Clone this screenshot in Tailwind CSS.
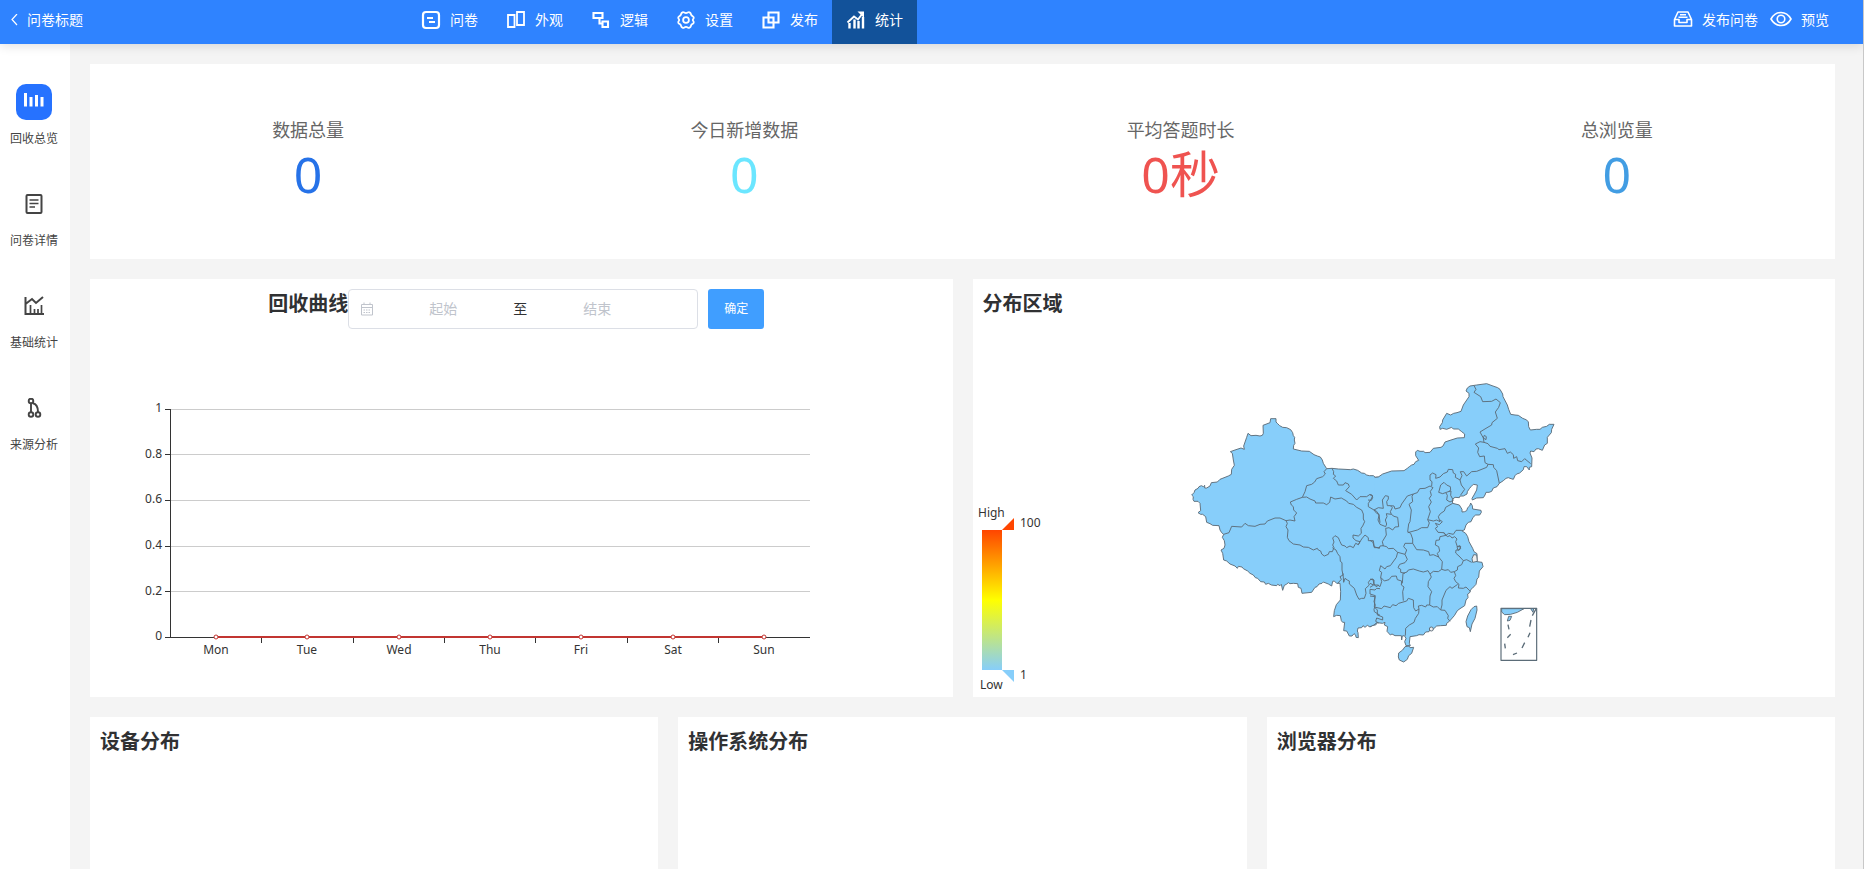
<!DOCTYPE html>
<html lang="zh-CN">
<head>
<meta charset="utf-8">
<meta name="viewport" content="width=device-width, initial-scale=1">
<title>问卷标题</title>
<script src="https://cdn.jsdelivr.net/npm/@tailwindcss/browser@4"></script>
</head>
<body class="flex min-h-screen flex-col border-r border-[#c8c8c8] bg-[#f4f4f4] font-['Noto_Sans','Noto_Sans_CJK_SC',sans-serif] text-sm text-[#303133]">
<header class="relative z-10 flex h-11 items-start bg-[#2f83ff] text-sm leading-5 text-white shadow-[0_2px_10px_rgba(0,0,0,0.12)]">
  <a href="#" class="flex h-10 w-[407px] items-center gap-2 pl-[9px]">
    <svg class="h-3 w-[10px]" viewBox="0 0 10 12" fill="none" stroke="currentColor" stroke-width="1.2"><path d="M8 0 3 5.500l5 5.500"/></svg>
    问卷标题
  </a>
  <nav class="flex flex-1">
    <a href="#" class="flex h-11 items-center gap-[9px] px-[14px] pb-1">
      <svg class="size-5" viewBox="0 0 20 20" fill="none" stroke="currentColor" stroke-width="2.200"><rect x="2" y="2" width="16" height="16" rx="3"/><path d="M6 8h6M8 12h6" stroke-width="1.800"/></svg>问卷</a>
    <a href="#" class="flex h-11 items-center gap-[9px] px-[14px] pb-1">
      <svg class="size-5" viewBox="0 0 20 20" fill="none" stroke="currentColor" stroke-width="1.800"><path d="M2 5h6.500v12H2zM11 2h7v13h-7z"/></svg>外观</a>
    <a href="#" class="flex h-11 items-center gap-[9px] px-[14px] pb-1">
      <svg class="size-5" viewBox="0 0 20 20" fill="none" stroke="currentColor" stroke-width="2.100"><path d="M2.500 3h9v5h-9zM11.500 11.500h5.500v5.500h-5.500zM8.500 8v5.500h3"/></svg>逻辑</a>
    <a href="#" class="flex h-11 items-center gap-[9px] px-[14px] pb-1">
      <svg class="size-5" viewBox="0 0 20 20" fill="none" stroke="currentColor" stroke-width="1.800" stroke-linejoin="round"><path d="M6.500 2.300C8 1.700 8.300 3.200 10 3.200s2-1.500 3.500-.9c1.500.6 1.200 1.700 1.800 2.700s2 1 2.400 2.300c.4 1.400-.9 1.700-.9 2.700s1.300 1.300.9 2.700c-.4 1.300-1.800 1.300-2.400 2.300s-.3 2.100-1.800 2.700c-1.500.6-1.800-.9-3.500-.9s-2 1.500-3.500.9C5 17.100 5.300 16 4.700 15s-2-1-2.400-2.300c-.4-1.400.9-1.700.9-2.700s-1.300-1.300-.9-2.700C2.700 6 4.100 6 4.700 5S5 2.900 6.500 2.300z"/><circle cx="10" cy="10" r="2.900"/></svg>设置</a>
    <a href="#" class="flex h-11 items-center gap-[9px] px-[14px] pb-1">
      <svg class="size-5" viewBox="0 0 20 20" fill="none" stroke="currentColor" stroke-width="2.100"><path d="M7.500 2.500h10v10h-10zM7.500 7.500h-5v10h10v-5M12.500 12.500v-5h-5"/></svg>发布</a>
    <a href="#" aria-current="page" class="flex h-11 items-center gap-[9px] bg-[#12529a] px-[14px] pb-1">
      <svg class="size-5" viewBox="0 0 20 20" fill="none" stroke="currentColor" stroke-width="2.400"><path d="M3.500 13v5.500M8.500 9.500v9M12.500 11v7.500M17 7v11.500"/><path d="m1.500 12.500 6.500-6 4 3 4.500-6" stroke-width="1.900"/><path d="M11.500 1.500H18v6.500z" fill="currentColor" stroke="none"/></svg>统计</a>
  </nav>
  <div class="flex h-10 items-center gap-3 pr-[34px]">
    <a href="#" class="flex items-center gap-[9px]">
      <svg class="h-5 w-5" viewBox="0 0 20 20" fill="none" stroke="currentColor" stroke-width="1.600" stroke-linejoin="round"><path d="M1.500 9.500V16h17V9.500L15 2H5zM1.500 9.500h4.500v3h8v-3h4.500M7 4.700h6M5.500 7.300h9"/></svg>发布问卷</a>
    <a href="#" class="flex items-center gap-[9px]">
      <svg class="h-5 w-[22px]" viewBox="0 0 22 20" fill="none" stroke="currentColor" stroke-width="1.600"><path d="M1 9C3.500 4.500 7 2.500 11 2.500S18.500 4.500 21 9C18.500 13.500 15 15.500 11 15.500S3.500 13.500 1 9z"/><circle cx="11" cy="9" r="3.800"/></svg>预览</a>
  </div>
</header>

<div class="flex flex-1">
  <aside class="w-[70px] shrink-0 bg-white pt-10 text-xs leading-4 text-[#444]">
    <nav class="flex w-[68px] flex-col gap-[39px]">
      <a href="#" aria-current="page" class="flex flex-col items-center gap-[11px]">
        <span class="flex size-9 items-center justify-center rounded-[10px] bg-[#2672ff] text-white">
          <svg class="size-5" viewBox="0 0 20 20" fill="currentColor"><path d="M0 1h3v13.500H0zM5.500 5h3v9.500h-3zM11 3h3v11.500h-3zM16.500 5h3v9.500h-3z"/></svg>
        </span>
        <span class="flex h-4 items-center">回收总览</span>
      </a>
      <a href="#" class="flex flex-col items-center gap-[11px]">
        <span class="flex size-9 items-center justify-center"><svg class="size-5" viewBox="0 0 20 20" fill="none" stroke="currentColor" stroke-width="2"><rect x="2.500" y="1" width="15" height="18" rx="1"/><path d="M5.500 6h9M5.500 9.500h9M5.500 13h5.500" stroke-width="1.700"/></svg></span>
        <span class="flex h-4 items-center">问卷详情</span>
      </a>
      <a href="#" class="flex flex-col items-center gap-[11px]">
        <span class="flex size-9 items-center justify-center"><svg class="size-5" viewBox="0 0 20 20" fill="none" stroke="currentColor" stroke-width="2"><path d="M1.500 1v17h18.500M1.500 8 8 3l4 4 7-6"/><path d="M6.500 18V9M10.500 18v-5M14 18v-5M17.500 18V9" stroke-width="1.700"/></svg></span>
        <span class="flex h-4 items-center">基础统计</span>
      </a>
      <a href="#" class="flex flex-col items-center gap-[11px]">
        <span class="flex size-9 items-center justify-center"><svg class="size-5" viewBox="0 0 20 20" fill="none" stroke="currentColor" stroke-width="1.900"><circle cx="7" cy="3" r="2.300"/><circle cx="7" cy="16.500" r="2.300"/><circle cx="14" cy="16.500" r="2.300"/><path d="M7 5.500V14M8.800 5.300C12 6 14 9 14 14"/></svg></span>
        <span class="flex h-4 items-center">来源分析</span>
      </a>
    </nav>
  </aside>

  <main class="flex min-w-0 flex-1 flex-col gap-5 pt-5 pr-7 pl-5">
    <section class="grid h-[195px] grid-cols-4 bg-white pt-[54px] text-center text-lg leading-6 text-[#666]">
      <div>数据总量<p class="text-[50px] leading-[64px] text-[#2672e8]">0</p></div>
      <div>今日新增数据<p class="text-[50px] leading-[64px] text-[#6be6ff]">0</p></div>
      <div>平均答题时长<p class="text-[50px] leading-[64px] text-[#ef5350]">0秒</p></div>
      <div>总浏览量<p class="text-[50px] leading-[64px] text-[#429de3]">0</p></div>
    </section>

    <div class="grid grid-cols-2 gap-5">
      <section class="flex h-[418px] flex-col justify-between bg-white pt-[10px]">
        <form class="flex items-start justify-center">
          <h2 class="text-xl leading-[30px] font-bold">回收曲线</h2>
          <div class="flex h-10 w-[350px] items-center rounded border border-[#dcdfe6] pl-[11px]">
            <svg class="mr-[5px] size-[14px]" viewBox="0 0 14 14" fill="none" stroke="#c0c4cc"><path d="M1.500 2.500h11v10.500h-11zM1.500 5.500h11M4 .5v2M10 .5v2"/><path d="M3.500 8h7M3.500 10.500h7" stroke-dasharray="1.500 1"/></svg>
            <input type="text" aria-label="起始" placeholder="起始" class="w-32 text-center text-sm outline-none placeholder:text-[#c0c4cc]">
            <span class="w-[26px] text-center">至</span>
            <input type="text" aria-label="结束" placeholder="结束" class="w-32 text-center text-sm outline-none placeholder:text-[#c0c4cc]">
          </div>
          <button type="button" class="mx-[10px] h-10 w-14 rounded-[3px] bg-[#409eff] text-xs text-white">确定</button>
        </form>
        <svg class="h-[348px] w-[800px] max-w-full" viewBox="0 0 800 348" font-size="12" fill="#333">
          <path d="M81 60.500h639M81 105.500h639M81 151.500h639M81 197.500h639M81 242.500h639" stroke="#ccc"/>
          <path d="M80.500 60v229M75 60.500h5M75 105.500h5M75 151.500h5M75 197.500h5M75 242.500h5M75 288.500h645M171.500 289v5M263.500 289v5M354.500 289v5M445.500 289v5M537.500 289v5M628.500 289v5" stroke="#333"/>
          <g text-anchor="end"><text x="72" y="63">1</text><text x="72" y="109">0.8</text><text x="72" y="154">0.6</text><text x="72" y="200">0.4</text><text x="72" y="246">0.2</text><text x="72" y="291">0</text></g>
          <g text-anchor="middle"><text x="126" y="305">Mon</text><text x="217" y="305">Tue</text><text x="309" y="305">Wed</text><text x="400" y="305">Thu</text><text x="491" y="305">Fri</text><text x="583" y="305">Sat</text><text x="674" y="305">Sun</text></g>
          <path d="M126 288h548" stroke="#c23531" stroke-width="2"/>
          <g fill="#fff" stroke="#c23531" stroke-width="1"><circle cx="126" cy="288" r="2"/><circle cx="217" cy="288" r="2"/><circle cx="309" cy="288" r="2"/><circle cx="400" cy="288" r="2"/><circle cx="491" cy="288" r="2"/><circle cx="583" cy="288" r="2"/><circle cx="674" cy="288" r="2"/></g>
        </svg>
      </section>

      <section class="flex h-[418px] flex-col justify-between bg-white pt-[10px]">
        <h2 class="px-[10px] text-xl leading-[30px] font-bold">分布区域</h2>
        <div class="flex w-[800px] max-w-full items-end">
          <svg class="h-[197px] w-[100px] shrink-0" viewBox="0 0 100 197" font-size="12" fill="#333">
            <defs><linearGradient id="heat" x1="0" y1="0" x2="0" y2="1"><stop offset="0" stop-color="#ff4500"/><stop offset=".5" stop-color="#ff0"/><stop offset="1" stop-color="#87cefa"/></linearGradient></defs>
            <text x="5" y="17">High</text><text x="7" y="189">Low</text>
            <text x="47" y="27">100</text><text x="47" y="179">1</text>
            <path d="M9 30h20v140H9z" fill="url(#heat)"/>
            <path d="M29 30 41 18v12z" fill="#ff4500"/><path d="M29 170h12v12z" fill="#87cefa"/>
          </svg>
          <div class="mr-[100px] flex min-w-0 flex-1 justify-center pb-[27px]">
            <svg class="h-[300px] w-[390px] shrink-0" viewBox="-6 0 1170 900" fill="#87cefa" stroke="#5b6c78" stroke-width="2.800" stroke-linejoin="round" role="img" aria-label="分布区域">
              <!-- Western provinces: land and coast line -->
              <path d="M600 321 586 322 580 317 568 317 560 315 553 310 545 309 533 301 520 297 511 299 495 298 475 297 456 295 440 296 430 280 427 270 421 261 412 258 402 254 388 244 365 243 340 237 341 226 345 220 343 210 344 202 340 197 338 188 332 179 320 173 308 172 299 167 292 160 288 156 288 146 272 146 270 158 249 166 250 190 247 196 240 198 228 196 213 197 204 190 200 202 191 228 193 238 183 234 165 240 151 245 157 250 160 270 163 286 155 298 154 313 145 318 120 328 112 336 94 338 90 348 80 354 74 354 74 346 70 350 64 347 57 350 54 355 45 360 42 368 35 375 40 380 39 388 42 394 54 394 60 400 62 422 54 428 62 433 68 433 77 440 80 457 90 461 98 466 117 467 120 480 125 488 131 493 127 502 133 512 135 525 132 535 123 540 128 550 131 570 140 573 150 582 165 588 172 595 175 589 186 591 190 596 203 603 210 610 220 615 226 623 233 625 242 635 253 636 257 643 265 640 274 645 290 647 293 643 300 647 304 643 308 661 313 646 319 643 325 638 330 641 340 640 353 641 355 652 363 655 366 670 395 667 405 652 411 650 417 642 426 640 430 636 445 642 455 648 458 634 463 633 470 640 480 640 482 665 481 690 469 704 463 722 461 740 470 736 481 737 484 752 488 757 494 757 491 782 500 783 508 798 516 798 522 791 527 795 528 802 535 803 534 788 532 783 534 774 545 773 549 767 555 772 562 766 570 771 578 766 587 765 592 758 600 753"/>
              <g transform="translate(570)">
                <!-- Eastern provinces -->
                <path d="M14 322 25 321 38 312 65 303 102 302 112 295 118 290 125 285 132 283 137 275 146 271 137 257 137 246 142 241 150 244 161 244 165 248 180 247 190 235 213 232 219 228 225 216 240 211 262 204 283 203 284 192 275 185 265 177 250 177 245 172 230 178 218 175 210 178 209 170 217 158 218 150 230 130 242 135 251 130 261 128 273 124 280 105 297 80 297 70 288 63 292 54 300 48 320 45 350 41 366 47 383 53 390 58 398 72 399 80 412 105 416 118 422 133 435 135 445 136 458 145 468 149 475 155 476 170 481 180 500 178 510 178 517 172 530 169 538 163 552 163 545 178 544 188 532 202 532 220 524 225 517 241 505 236 498 237 492 245 482 243 480 249 486 264 485 290 478 292 478 300 470 290 462 290 460 299 449 309 440 312 435 317 430 328 420 325 415 323 408 325 400 332 388 340 381 350 370 354 365 364 357 367 348 367 345 375 340 383 320 384 307 390 306 385 312 375 320 360 322 345 310 343 303 350 298 356 292 365 291 372 280 378 270 378 268 383 255 382 247 388 248 400 268 405 276 418 276 426 284 425 290 422 293 413 299 408 302 399 307 407 308 417 333 421 334 427 329 435 317 435 309 442 303 455 295 457 288 465 283 480 275 482 287 490 293 500 297 515 308 535 312 545 321 551 321 575 336 577 339 590 328 603 326 622 321 627 318 643 307 655 301 660 300 667 293 672 294 683 288 690 284 707 270 716 262 722 253 737 238 754 230 760 229 766 212 767 200 768 190 777 180 778 177 785 167 786 160 795 147 794 140 797 120 800 118 820 121 827 108 827 104 815 108 805 103 797 97 798 95 810 94 797 75 797 66 792 61 795 51 784 53 770 43 765 45 757 38 760 20 758 12 765 0 770"/>
                <path d="M320 708 312 710 303 719 293 738 288 755 291 770 298 773 301 785 306 762 315 745 321 720zM105 830 117 828 120 833 131 832 125 850 116 857 112 868 101 876 88 870 85 861 86 849 98 840z"/>
              </g>
              <!-- Province borders -->
              <g fill="none">
                <path d="M440 296 432 305 436 312 428 320 410 326 404 336 395 343 380 347 375 365 367 382 350 388 331 396 334 405 340 410 341 420 350 429 342 440 345 453 330 450 318 452 300 444 285 444 262 453 255 462 240 463 225 469 205 467 195 460 185 471 155 469 147 488 131 493"/>
                <path d="M367 382 380 381 390 387 405 393 407 399 430 399 440 404 449 397 452 381 465 387 484 384 500 393 506 400 520 403 530 412 545 420 550 432 550 447 554 455 548 468 543 475 544 490 535 498 519 495 519 504 528 512 540 515 535 524 527 520 520 533 510 528 500 533 495 528 485 525 480 515 475 503 465 497 458 504 462 516 458 525 462 533 457 545 448 545 445 553 433 558 425 552 422 543 415 540 412 535 400 540 385 532 370 531 360 525 340 522 327 512 322 502 324 480 318 470 322 460 318 452"/>
                <path d="M457 533 468 540 473 551 480 560 481 574 486 578 486 600 489 615 480 620 484 628 473 640M489 610 491 637 495 625 502 630 508 633 508 642 523 655 530 675 537 688 545 685 553 685 558 670 556 656 568 645 565 637 572 628 582 630 582 642 588 650 597 645"/>
                <path d="M600 656 590 655 585 660 570 658 570 672 586 677 582 695 586 705 582 718 583 725 600 736M456 295 461 305 460 313 467 318 460 325 470 333 475 345 490 345 495 338 505 342 508 350 497 362 515 373 530 390 540 380 560 380 570 373 578 378 572 390 565 400 565 410 582 420 590 430 597 433 600 458M535 524 545 507 555 495 565 503 565 512 580 512 583 533 600 533"/>
                <g transform="translate(570)">
                  <path d="M0 375 6 375 8 383 4 391-6 390M12 420 25 413 40 415 37 390 46 377 55 379 55 387 50 395 52 407 61 407 67 413 61 425 64 433 49 431 51 440 46 450 50 462 47 470 30 463 24 450 27 435 20 424zM64 433 72 439 83 442 86 470 75 471 68 480 57 473 47 475 49 495 37 515 40 527 30 528 28 535 12 530 9 517 0 511M61 407 72 408 75 417 90 413 95 402 112 378 130 372 126 379 128 395 117 403 124 420 120 455 116 462 113 485 122 490 128 507 128 520 105 520 101 530 110 540 105 553"/>
                  <path d="M130 372 142 368 149 356 165 355 180 348 189 353 181 364 184 376 178 385 184 396 176 410 181 425 173 449 178 459 173 473 155 473 142 480 113 488M185 348 186 335 180 330 180 315 188 309 198 314 197 325 210 321 220 311 232 306 235 298 248 299 250 309 257 313 256 322 270 330 274 345 284 358 272 375M270 330 276 317 271 305 281 305 290 318 305 305 320 304 350 292 354 283 345 278 343 258 329 260 323 247 326 234 316 222 330 215 342 217 340 204 330 186 348 175 365 165 366 158 382 145 376 126 386 112 391 98 378 87 365 94 338 95 332 80 312 67 318 58 312 47M354 283 370 284 371 292 380 302 388 340M342 217 354 221 360 229 382 235 387 239 405 236 412 250 421 246 430 254 431 265 440 260 443 272 455 275 464 266 482 281M340 204 343 196 349 200 348 209z"/>
                  <path d="M208 360 212 345 222 337 230 345 241 350 242 361 235 365 218 371 206 367zM235 365 243 363 242 376 250 391 240 396 230 390 232 376 228 369M173 449 190 453 200 450 210 455 205 440 211 431 223 423 227 412 248 400M210 450 217 455 208 464 196 460 203 470 196 475 204 487 220 488 228 496 236 490 250 493 258 481 275 481M228 496 210 500 208 510 198 511 196 525 206 530 209 543 202 550 206 561 190 554 179 556 176 545 160 540 140 539 128 520"/>
                  <path d="M220 486 232 500 240 497 246 504 254 500 261 507 257 515 262 530 272 530 268 540 258 540 257 549 270 561 280 572 290 569 305 577M280 572 275 584 263 590 262 600 253 605 257 617 252 625 257 635 267 643 265 654 280 655 288 651 301 664M206 561 217 575 215 598 225 601 235 599 242 607 253 605M38 527 50 530 55 536 70 535 83 547 105 553 112 568 105 578 89 583 84 593 92 598 92 607 105 610M83 547 79 562 61 587 50 590 45 597 32 587 28 602 35 607 32 622 43 633 57 629 65 619 79 618 82 629 95 633 94 645 102 651 98 665 100 692"/>
                  <path d="M97 640 99 610 111 606 115 600 130 597 148 603 160 606 174 602 180 612 190 604 205 605 215 598M180 612 184 621 175 635 174 650 185 665 180 678 179 705 190 711 202 710 212 720 216 705 216 690 228 661 240 650 246 655 263 643M212 720 225 721 235 737 233 745 240 754M179 705 170 705 167 711 155 706 145 708 147 717 137 723 131 713 130 690 115 685 110 693 86 700 78 707 68 704 61 713 42 708 35 716 13 711 15 680 0 678M147 717 146 730 136 745 132 757 118 765 107 775 106 797M13 711 22 720 22 735 38 741 38 750 20 744 17 754 26 759M32 622 35 635 30 650 23 645 12 645 9 627 0 628M0 640 11 645 0 652"/>
                  <path d="M261 530 270 527 272 536 264 541z"/>
                  <path d="M306 566 311 554 320 555 322 574 308 577z" fill="#eee"/><circle cx="184" cy="777" r="6" fill="#eee"/>
                  <path d="M393 715h107v156H393z" stroke-width="3.500"/>
                  <path d="M395 716h67l-20 11-20 6-18 1-9-8zM482 716h9l-2 11zM416 739h9l-5 12-8 2z" fill="#87cefa"/>
                  <path d="m498 717-11 20M483 750l-4 20M480 788l-6 14M464 818l-8 16M441 849l-12 5M404 821l2 14M422 793l-10 10M414 764l3 14" stroke-width="4"/>
                </g>
              </g>
            </svg>
          </div>
        </div>
      </section>
    </div>

    <div class="grid min-h-[152px] flex-1 grid-cols-3 gap-5">
      <section class="bg-white p-[10px]"><h2 class="text-xl leading-[30px] font-bold">设备分布</h2></section>
      <section class="bg-white p-[10px]"><h2 class="text-xl leading-[30px] font-bold">操作系统分布</h2></section>
      <section class="bg-white p-[10px]"><h2 class="text-xl leading-[30px] font-bold">浏览器分布</h2></section>
    </div>
  </main>
</div>
</body>
</html>
